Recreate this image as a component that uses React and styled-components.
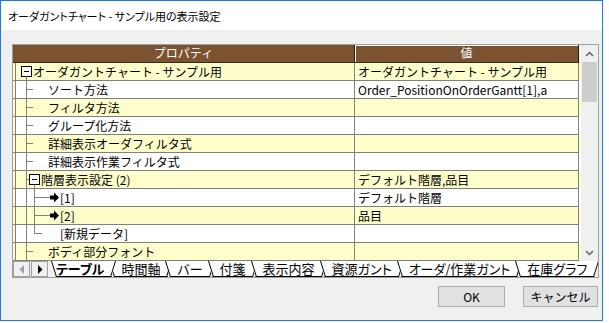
import React from "react";
import styled, { createGlobalStyle } from "styled-components";

const GlobalStyle = createGlobalStyle`
  html, body {
    margin: 0;
    padding: 0;
    background: #ffffff;
  }
  body {
    font-family: "Noto Sans CJK JP", "Noto Sans", sans-serif;
  }
`;

const LINE = "#808080";

const rows = [
  { label: "オーダガントチャート - サンプル用", value: "オーダガントチャート - サンプル用", tree: "root" },
  { label: "ソート方法", value: "Order_PositionOnOrderGantt[1],a", tree: "child" },
  { label: "フィルタ方法", tree: "child" },
  { label: "グループ化方法", tree: "child" },
  { label: "詳細表示オーダフィルタ式", tree: "child" },
  { label: "詳細表示作業フィルタ式", tree: "child" },
  { label: "階層表示設定 (2)", value: "デフォルト階層,品目", tree: "group" },
  { label: "[1]", value: "デフォルト階層", tree: "item" },
  { label: "[2]", value: "品目", tree: "item" },
  { label: "[新規データ]", tree: "itemLast" },
  { label: "ボディ部分フォント", tree: "child" },
];

const tabs = ["テーブル", "時間軸", "バー", "付箋", "表示内容", "資源ガント", "オーダ/作業ガント", "在庫グラフ"];

//tree connectors, coords start right after the row strip (x=16)
const TreeLines = ({ kind }) => {
  if (kind === "root")
    return (
      <svg width="17" height="17">
        <rect x="5.5" y="3.5" width="10" height="10" fill="#fff" stroke="#000" />
        <line x1="8" y1="8.5" x2="13" y2="8.5" stroke="#000" />
        <line x1="10.5" y1="13.5" x2="10.5" y2="17" stroke={LINE} />
      </svg>
    );
  if (kind === "child")
    return (
      <svg width="32" height="17">
        <line x1="10.5" y1="0" x2="10.5" y2="17" stroke={LINE} />
        <line x1="10.5" y1="8.5" x2="17" y2="8.5" stroke={LINE} />
      </svg>
    );
  if (kind === "group")
    return (
      <svg width="25" height="17">
        <line x1="10.5" y1="0" x2="10.5" y2="17" stroke={LINE} />
        <line x1="10.5" y1="8.5" x2="13.5" y2="8.5" stroke={LINE} />
        <rect x="13.5" y="3.5" width="10" height="10" fill="#fff" stroke="#000" />
        <line x1="16" y1="8.5" x2="21" y2="8.5" stroke="#000" />
        <line x1="18.5" y1="13.5" x2="18.5" y2="17" stroke={LINE} />
      </svg>
    );
  if (kind === "item")
    return (
      <svg width="44" height="17">
        <line x1="10.5" y1="0" x2="10.5" y2="17" stroke={LINE} />
        <line x1="18.5" y1="0" x2="18.5" y2="17" stroke={LINE} />
        <line x1="18.5" y1="8.5" x2="34" y2="8.5" stroke={LINE} />
        <polygon points="34,6.5 38,6.5 38,3.5 43,8.5 38,13.5 38,10.5 34,10.5" fill="#000" />
      </svg>
    );
  return (
    <svg width="44" height="17">
      <line x1="10.5" y1="0" x2="10.5" y2="17" stroke={LINE} />
      <line x1="18.5" y1="0" x2="18.5" y2="8.5" stroke={LINE} />
      <line x1="18.5" y1="8.5" x2="26" y2="8.5" stroke={LINE} />
    </svg>
  );
};

const Chevron = ({ up }) => (
  <svg width="9" height="6" viewBox="0 0 9 6">
    <polyline
      points={up ? "1,5 4.5,1.5 8,5" : "1,1 4.5,4.5 8,1"}
      fill="none"
      stroke="#606060"
      strokeWidth="1.5"
    />
  </svg>
);

const Triangle = ({ left, disabled }) => (
  <svg width="6" height="9" viewBox="0 0 6 9">
    <polygon points={left ? "5,0 5,9 0.5,4.5" : "1,0 1,9 5.5,4.5"} fill={disabled ? "#a0a0a0" : "#000"} />
  </svg>
);

const App = () => {
  return (
    <>
      <GlobalStyle />
      <StyWindow>
        <StyTitle>オーダガントチャート - サンプル用の表示設定</StyTitle>
        <StyBody>
          <StySheet>
            <div className="main">
              <div className="table">
                <StyHeader>
                  <div className="prop">プロパティ</div>
                  <div className="val">値</div>
                </StyHeader>
                {rows.map((row, i) => (
                  <StyRow key={i} $alt={i % 2 === 0}>
                    <div className="prop">
                      <span className="strip" />
                      <TreeLines kind={row.tree} />
                      <span className="label">{row.label}</span>
                    </div>
                    <div className="val">{row.value}</div>
                  </StyRow>
                ))}
              </div>
              <StyScroll>
                <div className="btn">
                  <Chevron up />
                </div>
                <div className="track">
                  <div className="thumb" />
                </div>
                <div className="btn">
                  <Chevron />
                </div>
              </StyScroll>
            </div>
            <StyTabBar>
              <StyNavBtn>
                <Triangle left disabled />
              </StyNavBtn>
              <StyNavBtn>
                <Triangle />
              </StyNavBtn>
              <div className="tabs">
                {tabs.map((t, i) => (
                  <StyTab key={t} $active={i === 0} $z={i === 0 ? 50 : i + 1}>
                    <span className="fill" />
                    <svg className="edge left" width="6" height="16">
                      <line x1="0.5" y1="0" x2="5.5" y2="16" stroke="#000" />
                    </svg>
                    <svg className="edge right" width="6" height="16">
                      <line x1="5.5" y1="0" x2="0.5" y2="16" stroke="#000" />
                    </svg>
                    <span className="text">{t}</span>
                  </StyTab>
                ))}
              </div>
            </StyTabBar>
          </StySheet>
          <StyFooter>
            <StyButton $w={67}>OK</StyButton>
            <StyButton $w={75}>キャンセル</StyButton>
          </StyFooter>
        </StyBody>
      </StyWindow>
    </>
  );
};

const StyWindow = styled.div`
  width: 603px;
  height: 321px;
  box-sizing: border-box;
  border: 1px solid #1c7bd4;
  display: flex;
  flex-direction: column;
  overflow: hidden;
`;

const StyTitle = styled.div`
  height: 29px;
  background: #ffffff;
  display: flex;
  align-items: center;
  padding-left: 7px;
  font-size: 11px;
  font-feature-settings: "palt";
  color: #000;
`;

const StyBody = styled.div`
  flex: 1;
  background: #f0f0f0;
  padding: 14px 5px 0 11px;
`;

const StySheet = styled.div`
  width: 585px;
  border: 1px solid #a0a0a0;
  background: #f0f0f0;
  .main {
    display: flex;
  }
  .table {
    flex: 1;
  }
`;

const StyHeader = styled.div`
  display: grid;
  grid-template-columns: 342px 224px;
  height: 18px;
  font-size: 12px;
  color: #ffffff;
  .prop,
  .val {
    background: #7b5331;
    box-sizing: border-box;
    border-bottom: 1px solid #3a2a1a;
    border-right: 1px solid #2a1a0a;
    text-align: center;
    line-height: 16px;
  }
  .val {
    box-shadow: inset 1px 1px 0 #ffffff;
  }
`;

const StyRow = styled.div`
  display: grid;
  grid-template-columns: 342px 224px;
  height: 18px;
  font-size: 12px;
  color: #000;
  background: ${(p) => (p.$alt ? "#ffffcc" : "#ffffff")};
  .prop,
  .val {
    box-sizing: border-box;
    border-bottom: 1px solid ${LINE};
    border-right: 1px solid ${LINE};
    height: 18px;
    display: flex;
    align-items: center;
    white-space: nowrap;
    overflow: hidden;
  }
  .strip {
    width: 2px;
    height: 17px;
    background: #ffffcc;
    border-right: 1px solid ${LINE};
    flex-shrink: 0;
  }
  svg {
    flex-shrink: 0;
    display: block;
  }
  .label {
    line-height: 17px;
  }
  .val {
    padding-left: 3px;
    line-height: 17px;
  }
`;

const StyScroll = styled.div`
  width: 17px;
  display: flex;
  flex-direction: column;
  background: #f0f0f0;
  .btn {
    height: 17px;
    display: flex;
    align-items: center;
    justify-content: center;
  }
  .track {
    flex: 1;
  }
  .thumb {
    height: 40px;
    margin: 0 1px;
    background: #cdcdcd;
  }
`;

const StyTabBar = styled.div`
  display: flex;
  align-items: stretch;
  height: 16px;
  background: #f0f0f0;
  overflow-x: clip;
  overflow-y: visible;
  .tabs {
    display: flex;
    flex-shrink: 0;
    padding-left: 9px;
  }
`;

const StyNavBtn = styled.div`
  flex-shrink: 0;
  width: 15px;
  height: 14px;
  margin-right: 1px;
  border: 1px solid #a0a0a0;
  background: #f0f0f0;
  display: flex;
  align-items: center;
  justify-content: center;
`;

const StyTab = styled.div`
  position: relative;
  z-index: ${(p) => p.$z};
  margin-left: -7px;
  padding: 0 12px 0 ${(p) => (p.$active ? 5 : 12)}px;
  height: 16px;
  flex-shrink: 0;
  display: flex;
  align-items: center;
  font-size: 13px;
  line-height: 16px;
  .fill {
    position: absolute;
    inset: 0;
    background: #ffffff;
    clip-path: polygon(0 0, 100% 0, calc(100% - 5px) 100%, 5px 100%);
    border-bottom: 1px solid #000;
    box-sizing: border-box;
  }
  .edge {
    position: absolute;
    top: 0;
  }
  .edge.left {
    left: 0;
  }
  .edge.right {
    right: 0;
  }
  .text {
    position: relative;
    font-weight: ${(p) => (p.$active ? 700 : 400)};
    font-feature-settings: "palt";
    white-space: nowrap;
  }
`;

const StyFooter = styled.div`
  display: flex;
  justify-content: flex-end;
  gap: 18px;
  margin-top: 8px;
  width: 586px;
`;

const StyButton = styled.button`
  flex: 0 0 auto;
  box-sizing: border-box;
  width: ${(p) => p.$w}px;
  height: 21px;
  padding: 0;
  background: #e1e1e1;
  border: 1px solid #adadad;
  font-family: "Noto Sans CJK JP", "Noto Sans", sans-serif;
  font-size: 12px;
  color: #000;
`;

export default App;
